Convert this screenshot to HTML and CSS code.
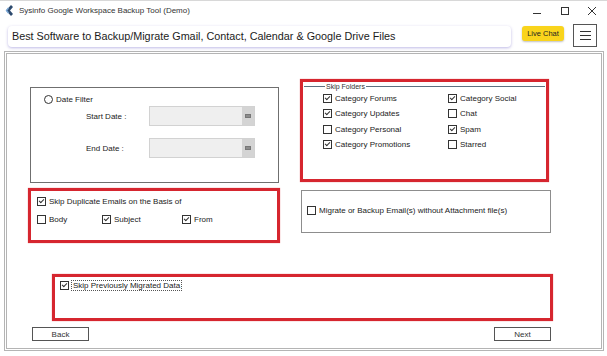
FILE: index.html
```html
<!DOCTYPE html>
<html lang="en">
  <head>
    <meta charset="UTF-8" />
    <title>Sysinfo Google Workspace Backup Tool (Demo)</title>
    <link rel="stylesheet" href="styles.css">
  </head>
  <body>
    <div class="title-bar">
      <svg class="logo" width="9" height="11" viewBox="0 0 9 11">
        <path d="M6 0 L1 5.5 L6 11 L8 9 L5 5.5 L8 2 Z" fill="#2d4a6e" />
        <path d="M3.5 3 L1.5 5.5 L3.5 8" fill="none" stroke="#7aa7d6" stroke-width="1.4" />
      </svg>
      <span class="title-text">Sysinfo Google Workspace Backup Tool (Demo)</span>
      <div class="win-controls">
        <svg width="10" height="10" viewBox="0 0 10 10"><line x1="0" y1="7.5" x2="8" y2="7.5" stroke="#333" /></svg>
        <svg width="10" height="10" viewBox="0 0 10 10"><rect x="1.5" y="1.5" width="7" height="7" fill="none" stroke="#333" /></svg>
        <svg width="10" height="10" viewBox="0 0 10 10"><path d="M1 1 L9 9 M9 1 L1 9" stroke="#333" /></svg>
      </div>
    </div>

    <div class="header">
      <div class="banner">Best Software to Backup/Migrate Gmail, Contact, Calendar &amp; Google Drive Files</div>
      <div class="live-chat">Live Chat</div>
      <div class="menu-btn">
        <span></span><span></span><span></span>
      </div>
    </div>

    <div class="panel">
      <div class="top-section">
        <div class="left-col">
          <div class="date-group">
            <div class="radio-row"><span class="radio"></span>Date Filter</div>
            <div class="date-row">
              <span class="date-label">Start Date :</span>
              <div class="date-input"><span class="date-btn"><i></i></span></div>
            </div>
            <div class="date-row">
              <span class="date-label">End Date :</span>
              <div class="date-input"><span class="date-btn"><i></i></span></div>
            </div>
          </div>
          <div class="red-box dup-box">
            <div class="check"><span class="cb on"></span>Skip Duplicate Emails on the Basis of</div>
            <div class="dup-options">
              <div class="check opt-body"><span class="cb"></span>Body</div>
              <div class="check opt-subject"><span class="cb on"></span>Subject</div>
              <div class="check"><span class="cb on"></span>From</div>
            </div>
          </div>
        </div>

        <div class="right-col">
          <div class="red-box folders-box">
            <fieldset class="folders">
              <legend>Skip Folders</legend>
              <div class="folder-grid">
                <div class="check"><span class="cb on"></span>Category Forums</div>
                <div class="check"><span class="cb on"></span>Category Social</div>
                <div class="check"><span class="cb on"></span>Category Updates</div>
                <div class="check"><span class="cb"></span>Chat</div>
                <div class="check"><span class="cb"></span>Category Personal</div>
                <div class="check"><span class="cb on"></span>Spam</div>
                <div class="check"><span class="cb on"></span>Category Promotions</div>
                <div class="check"><span class="cb"></span>Starred</div>
              </div>
            </fieldset>
          </div>
          <div class="attach-box">
            <div class="check"><span class="cb"></span>Migrate or Backup Email(s) without Attachment file(s)</div>
          </div>
        </div>
      </div>

      <div class="red-box prev-box">
        <div class="check"><span class="cb on"></span><span class="focused">Skip Previously Migrated Data</span></div>
      </div>

      <div class="nav-buttons">
        <button class="nav-btn">Back</button>
        <button class="nav-btn">Next</button>
      </div>
    </div>
  </body>
</html>
```

FILE: styles.css
```css
* {
  box-sizing: border-box;
}

html, body {
  margin: 0;
  width: 607px;
  height: 356px;
  overflow: hidden;
  background-color: #fff;
}

body {
  font-family: "Liberation Sans", Arial, sans-serif;
  font-size: 8px;
  color: #222;
  border-top: 1px solid #d8d8d8;
}

/* title bar */
.title-bar {
  display: flex;
  align-items: center;
  height: 19px;
  padding-left: 5px;
}

.logo {
  margin-right: 5px;
}

.title-text {
  font-size: 8px;
  color: #333;
}

.win-controls {
  margin-left: auto;
  display: flex;
  gap: 17px;
  padding-right: 10px;
}

/* header */
.header {
  display: flex;
  align-items: flex-start;
  height: 31px;
  padding: 6px 9px 0 8px;
}

.banner {
  width: 503px;
  height: 21px;
  padding: 4px 0 0 4px;
  background-color: #fff;
  border-radius: 4px;
  box-shadow: 0 1px 3px rgba(110, 100, 200, 0.45);
  font-size: 10.8px;
  color: #1b1b1b;
}

.live-chat {
  margin-left: 11px;
  width: 42px;
  height: 15px;
  line-height: 15px;
  text-align: center;
  font-size: 7.5px;
  background-color: #f9d41c;
  border-radius: 3px;
  box-shadow: 0 1px 2px rgba(0, 0, 0, 0.25);
  color: #222;
}

.menu-btn {
  margin-left: 9px;
  margin-top: -2px;
  width: 24px;
  height: 23px;
  border: 1px solid #555;
  display: flex;
  flex-direction: column;
  justify-content: center;
  align-items: center;
  gap: 3px;
  background-color: #fff;
}

.menu-btn span {
  display: block;
  width: 11px;
  height: 1px;
  background-color: #333;
}

/* main panel */
.panel {
  margin-left: 4px;
  width: 600px;
  height: 300px;
  border: 3px double #b4b4b4;
}

.top-section {
  display: flex;
  padding-top: 25px;
}

.left-col {
  margin-left: 21px;
  width: 252px;
  padding-top: 8px;
}

.right-col {
  margin-left: 20px;
  width: 251px;
}

.red-box {
  border: 3px solid #d6262f;
  box-shadow: 0 0 1px rgba(214, 38, 47, 0.6);
}

/* date filter */
.date-group {
  margin-left: 2px;
  width: 249px;
  height: 96px;
  border: 1px solid #6f6f6f;
  padding: 6px 0 0 13px;
}

.radio-row {
  display: flex;
  align-items: center;
  height: 10px;
}

.radio {
  display: inline-block;
  width: 9px;
  height: 9px;
  border: 1px solid #333;
  border-radius: 50%;
  margin-right: 3px;
  background-color: #fff;
}

.date-row {
  display: flex;
  align-items: center;
  margin-top: 2px;
}

.date-row + .date-row {
  margin-top: 12px;
}

.date-label {
  width: 63px;
  margin-left: 42px;
}

.date-input {
  width: 106px;
  height: 20px;
  background-color: #efefef;
  border: 1px solid #d2d2d2;
  display: flex;
  justify-content: flex-end;
}

.date-btn {
  width: 12px;
  height: 100%;
  background-color: #d4d4d4;
  display: flex;
  align-items: center;
  justify-content: center;
}

.date-btn i {
  display: block;
  width: 6px;
  height: 4px;
  background-color: #8c8c8c;
  border: 1px solid #777;
}

/* checkboxes */
.check {
  display: flex;
  align-items: center;
  height: 10px;
  white-space: nowrap;
}

.cb {
  position: relative;
  display: inline-block;
  flex: none;
  width: 9px;
  height: 9px;
  border: 1px solid #333;
  background-color: #fff;
  margin-right: 3px;
}

.cb.on::after {
  content: "";
  position: absolute;
  left: 1px;
  top: 1px;
  width: 4px;
  height: 2px;
  border-left: 1px solid #333;
  border-bottom: 1px solid #333;
  transform: rotate(-45deg);
}

.dup-box {
  margin-top: 5px;
  width: 252px;
  height: 55px;
  padding: 5px 0 0 6px;
}

.dup-options {
  display: flex;
  margin-top: 8px;
}

.opt-body {
  width: 65px;
}

.opt-subject {
  width: 80px;
}

/* skip folders */
.folders-box {
  width: 249px;
  height: 103px;
  padding: 0 1px;
}

.folders {
  margin: 0;
  padding: 0 0 0 19px;
  border: none;
  border-top: 1px solid #5d7080;
  margin-top: 1px;
}

.folders legend {
  padding: 0 1px;
  margin-left: 2px;
  font-size: 7px;
  color: #333;
}

.folder-grid {
  display: grid;
  grid-template-columns: 125px 1fr;
  row-gap: 5.5px;
  margin-top: 3px;
}

.attach-box {
  margin-top: 8px;
  margin-left: 1px;
  width: 250px;
  height: 43px;
  border: 1px solid #8d8d8d;
  padding: 14px 0 0 5px;
}

/* skip previously migrated */
.prev-box {
  margin-top: 31px;
  margin-left: 45px;
  width: 501px;
  height: 47px;
  padding: 3px 0 0 5px;
}

.focused {
  outline: 1px dotted #555;
  outline-offset: 0;
  padding: 0 1px;
}

/* nav buttons */
.nav-buttons {
  display: flex;
  justify-content: space-between;
  margin: 6px 0 0 25px;
  width: 519px;
}

.nav-btn {
  width: 57px;
  height: 14px;
  padding: 0;
  font-family: "Liberation Sans", Arial, sans-serif;
  font-size: 8px;
  color: #333;
  background-color: #fff;
  border: 1px solid #555;
  border-radius: 0;
}
```
